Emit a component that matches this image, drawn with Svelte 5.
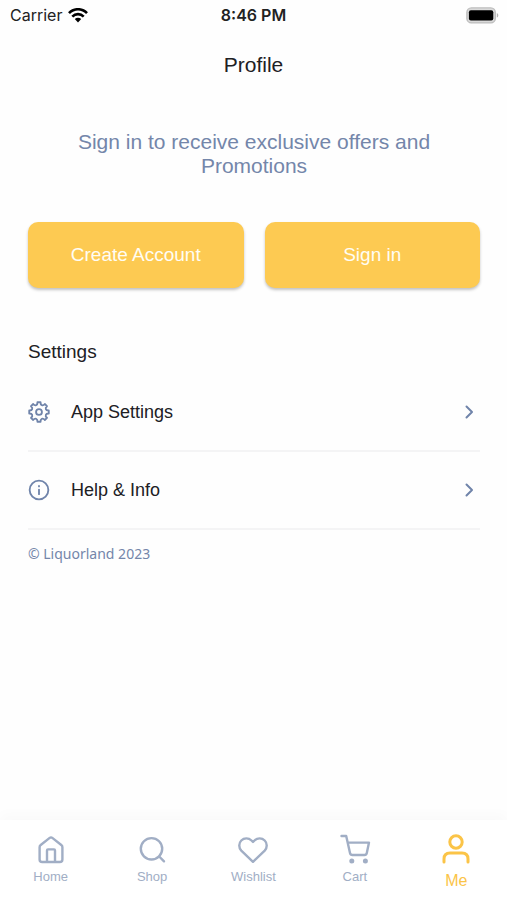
<script>
  const tabs = ['Home', 'Shop', 'Wishlist', 'Cart', 'Me'];
  const rows = ['App Settings', 'Help & Info'];

  const point = (radius, degrees) => {
    const a = (degrees * Math.PI) / 180;
    return `${(12 + radius * Math.cos(a)).toFixed(2)} ${(12 + radius * Math.sin(a)).toFixed(2)}`;
  };

  // Eight-toothed gear with rounded valleys between the teeth
  let gear = `M${point(10.8, -9)}`;
  for (let i = 0; i < 8; i++) {
    const t = i * 45;
    gear += `L${point(10.8, t + 9)}C${point(7.4, t + 11)} ${point(7.4, t + 34)} ${point(10.8, t + 36)}`;
  }
  gear += 'Z';
</script>

<div class="screen">
  <div class="status">
    <span class="carrier">
      Carrier
      <svg width="20" height="15" viewBox="0 0 20 15" aria-hidden="true">
        <g fill="none" stroke="#000" stroke-width="2.6">
          <path d="M1 5.2C6-.1 14-.1 19 5.2" />
          <path d="M4.3 8.6C7.5 5.3 12.5 5.3 15.7 8.6" />
        </g>
        <path d="M6.8 11.1C8.7 9.4 11.3 9.4 13.2 11.1L10 14.5Z" />
      </svg>
    </span>
    <span class="time">8:46 PM</span>
    <svg class="battery" width="33" height="17" viewBox="0 0 33 17" aria-hidden="true">
      <rect x="0.9" y="0.9" width="28.4" height="15" rx="4.5" fill="#dadada" stroke="#bdbdbd" stroke-width="1.4" />
      <rect x="2.9" y="3.2" width="24.4" height="10.4" rx="2" />
      <path d="M30.8 6v4.6C32.8 9.8 32.8 6.8 30.8 6Z" fill="#b5b5b5" />
    </svg>
  </div>

  <header><h1>Profile</h1></header>

  <main>
    <p class="intro">Sign in to receive exclusive offers and Promotions</p>
    <div class="actions">
      <button type="button">Create Account</button>
      <button type="button">Sign in</button>
    </div>

    <h2>Settings</h2>
    <ul>
      {#each rows as row, i}
        <li>
          <a href="#settings-{i}">
            <svg width="22" height="22" viewBox="0 0 24 24" class="line" aria-hidden="true">
              {#if i === 0}
                <path d={gear} />
                <circle cx="12" cy="12" r="3.2" />
              {:else}
                <circle cx="12" cy="12" r="10.2" />
                <path d="M12 11.5v5M12 7.5v.6" />
              {/if}
            </svg>
            <span>{row}</span>
            <svg class="line chevron" width="22" height="22" viewBox="0 0 22 22" aria-hidden="true">
              <path d="M8.5 5.5L14 11L8.5 16.5" />
            </svg>
          </a>
        </li>
      {/each}
    </ul>
    <p class="copyright">© Liquorland 2023</p>
  </main>

  <nav aria-label="Main">
    {#each tabs as tab}
      <a href="#{tab.toLowerCase()}" class:active={tab === 'Me'}>
        <svg width="32" height="32" viewBox="0 0 32 32" aria-hidden="true">
          {#if tab === 'Home'}
            <path d="M4.6 13.2Q4.6 11.8 5.7 11L14.7 3.9Q16 2.9 17.3 3.9L26.3 11Q27.4 11.8 27.4 13.2V25.4Q27.4 28 24.8 28H7.2Q4.6 28 4.6 25.4Z" />
            <path d="M12 27.5V16.4Q12 15.4 13 15.4H19Q20 15.4 20 16.4V27.5" />
          {:else if tab === 'Shop'}
            <circle cx="15.5" cy="14.8" r="10.7" />
            <path d="M23.2 22.5L28 27.3" />
          {:else if tab === 'Wishlist'}
            <path d="M16 27.8L4.3 16.6C1.6 13.6 1.6 9.2 4.3 6.5C7.1 3.7 11.6 3.7 14.5 6.5L16 8L17.5 6.5C20.4 3.7 24.9 3.7 27.7 6.5C30.4 9.2 30.4 13.6 27.7 16.6Z" />
          {:else if tab === 'Cart'}
            <path d="M2.5 2H7.2L11 19Q11.4 21 13.4 21H25.5Q27.4 21 27.8 19L30 8.6H8.8" />
            <circle class="dot" cx="12.8" cy="27" r="2.5" />
            <circle class="dot" cx="26.4" cy="27" r="2.5" />
          {:else}
            <circle cx="16" cy="9" r="6.2" />
            <path d="M4 29V26Q4 20 10 20H22Q28 20 28 26V29" />
          {/if}
        </svg>
        <span>{tab}</span>
      </a>
    {/each}
  </nav>
</div>

<style>
  :global(body) {
    margin: 0;
    background: #fefefe;
  }
  .screen {
    min-height: 100vh;
    display: flex;
    flex-direction: column;
    font-family: 'Liberation Sans', Arial, sans-serif;
    color: #202024;
  }
  .status {
    display: grid;
    grid-template-columns: 1fr auto 1fr;
    align-items: center;
    height: 30px;
    padding: 0 8px;
    font-family: Inter, sans-serif;
    font-size: 16px;
    color: #222;
  }
  .carrier {
    display: flex;
    align-items: center;
    gap: 6px;
    padding-left: 2px;
  }
  .time {
    font-weight: 600;
  }
  .battery {
    justify-self: end;
  }
  header {
    display: flex;
    align-items: center;
    justify-content: center;
    height: 70px;
  }
  h1,
  h2,
  p,
  ul {
    margin: 0;
    padding: 0;
    font-weight: 400;
  }
  h1 {
    font-size: 21px;
    line-height: 24px;
  }
  main {
    flex: 1;
    padding: 30px 27px 0 28px;
  }
  .intro {
    padding: 0 48px;
    text-align: center;
    font-size: 21px;
    line-height: 24px;
    color: #7486aa;
  }
  .actions {
    display: grid;
    grid-template-columns: 1fr 1fr;
    gap: 21px;
    margin-top: 44px;
  }
  button {
    height: 66px;
    padding: 0;
    border: 0;
    border-radius: 10px;
    background: #fdca52;
    color: #fffdf4;
    font: inherit;
    font-size: 19px;
    box-shadow: 0 2px 3px rgb(0 0 0 / 24%);
    cursor: pointer;
  }
  h2 {
    margin-top: 52px;
    font-size: 19px;
    line-height: 24px;
  }
  ul {
    list-style: none;
    margin-top: 10px;
  }
  li {
    border-bottom: 2px solid #f4f4f5;
  }
  li a {
    display: flex;
    align-items: center;
    gap: 21px;
    height: 76px;
    color: inherit;
    font-size: 18px;
    text-decoration: none;
  }
  .line {
    fill: none;
    stroke: #7084aa;
    stroke-width: 2;
    stroke-linecap: round;
    stroke-linejoin: round;
  }
  .chevron {
    margin-left: auto;
  }
  .copyright {
    margin-top: 14px;
    font-family: 'Noto Sans', sans-serif;
    font-size: 14px;
    line-height: 20px;
    color: #7486aa;
  }
  nav {
    display: grid;
    grid-template-columns: repeat(5, 1fr);
    height: 80px;
    background: #fff;
    box-shadow: 0 -6px 12px rgb(0 0 0 / 2%);
  }
  nav a {
    display: flex;
    flex-direction: column;
    align-items: center;
    padding-top: 14px;
    color: #a1aec5;
    font-size: 13px;
    line-height: 16px;
    text-decoration: none;
  }
  nav svg {
    fill: none;
    stroke: currentColor;
    stroke-width: 2.4;
    stroke-linecap: round;
    stroke-linejoin: round;
  }
  nav span {
    margin-top: 3px;
  }
  .dot {
    fill: currentColor;
    stroke: none;
  }
  nav .active {
    padding-top: 13px;
    color: #fbc447;
    font-size: 16px;
  }
  nav .active svg {
    stroke-width: 3;
  }
  nav .active span {
    margin-top: 8px;
  }
</style>
